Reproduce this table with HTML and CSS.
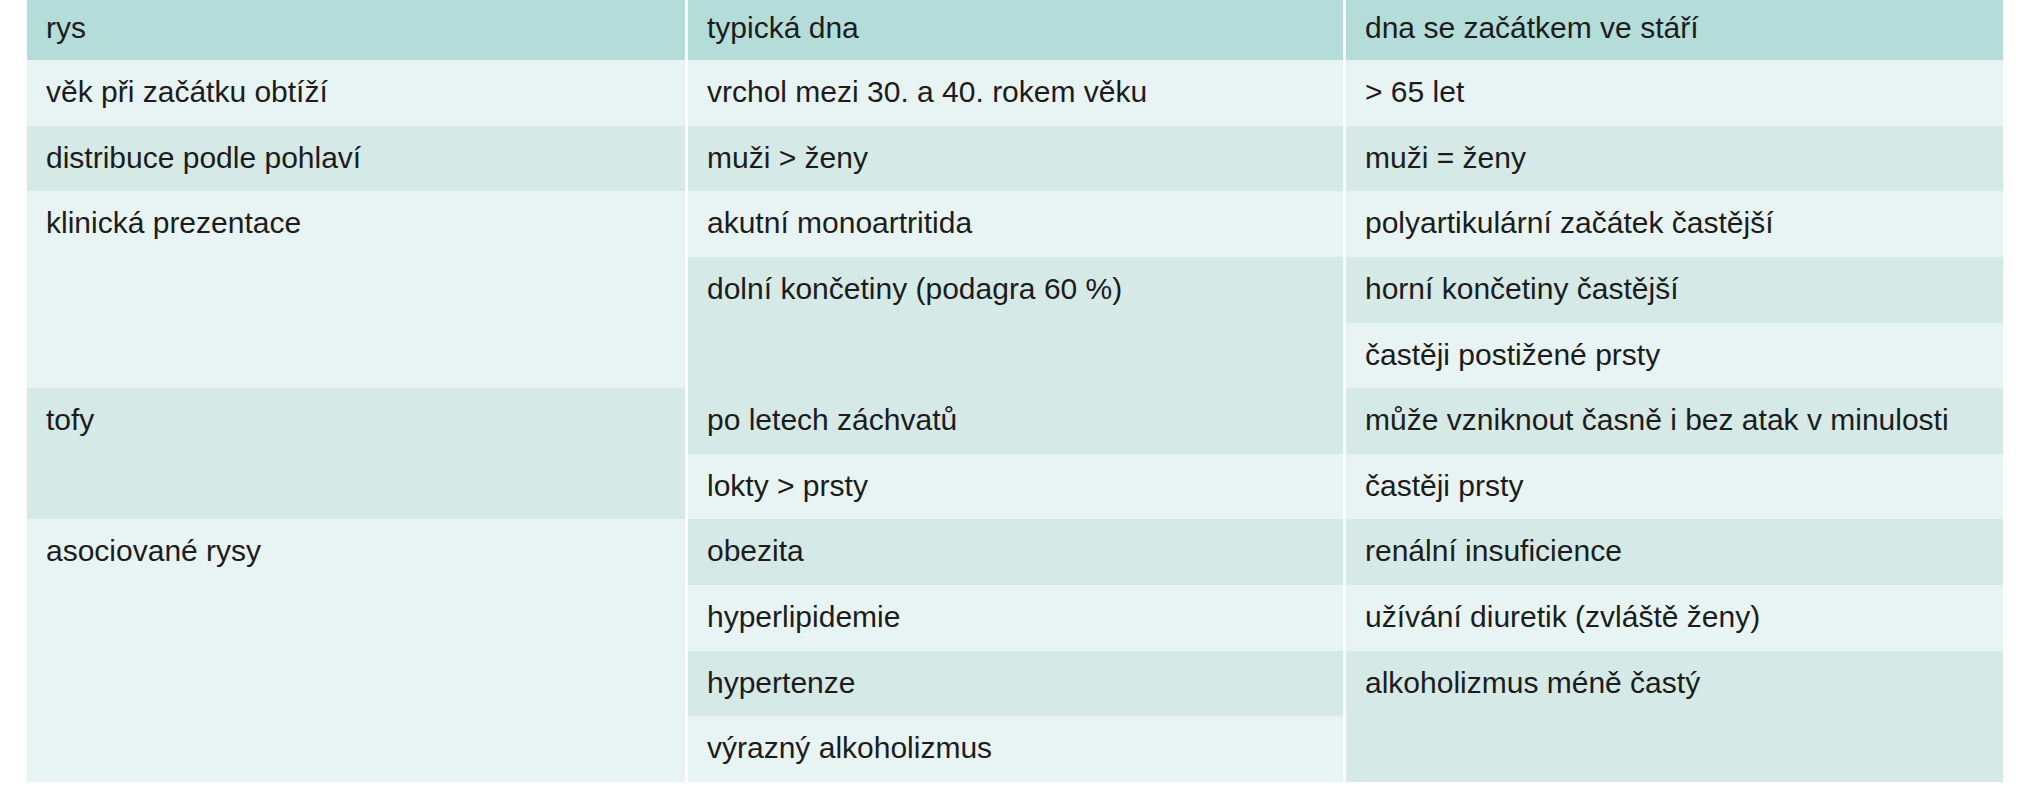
FILE: index.html
```html
<!DOCTYPE html>
<html lang="cs">
<head>
<meta charset="utf-8">
<title>Dna – srovnání</title>
<link rel="stylesheet" href="styles.css">
</head>
<body>
<div class="table">
  <div class="cell head">rys</div>
  <div class="cell head">typická dna</div>
  <div class="cell head">dna se začátkem ve stáří</div>

  <div class="cell l">věk při začátku obtíží</div>
  <div class="cell l">vrchol mezi 30. a 40. rokem věku</div>
  <div class="cell l">&gt; 65 let</div>

  <div class="cell d">distribuce podle pohlaví</div>
  <div class="cell d">muži &gt; ženy</div>
  <div class="cell d">muži = ženy</div>

  <div class="cell l span3">klinická prezentace</div>
  <div class="cell l">akutní monoartritida</div>
  <div class="cell l">polyartikulární začátek častější</div>
  <div class="cell d span2">dolní končetiny (podagra 60 %)</div>
  <div class="cell d">horní končetiny častější</div>
  <div class="cell l">častěji postižené prsty</div>

  <div class="cell d span2">tofy</div>
  <div class="cell d">po letech záchvatů</div>
  <div class="cell d">může vzniknout časně i bez atak v minulosti</div>
  <div class="cell l">lokty &gt; prsty</div>
  <div class="cell l">častěji prsty</div>

  <div class="cell l span4">asociované rysy</div>
  <div class="cell d">obezita</div>
  <div class="cell d">renální insuficience</div>
  <div class="cell l">hyperlipidemie</div>
  <div class="cell l">užívání diuretik (zvláště ženy)</div>
  <div class="cell d">hypertenze</div>
  <div class="cell d span2">alkoholizmus méně častý</div>
  <div class="cell l">výrazný alkoholizmus</div>
</div>
</body>
</html>
```

FILE: styles.css
```css
html, body {
  margin: 0;
  padding: 0;
  background: #ffffff;
}

body {
  font-family: "Liberation Sans", Arial, sans-serif;
  color: #1c1c1c;
}

.table {
  margin-left: 27px;
  display: grid;
  grid-template-columns: 658px 655px 657px;
  grid-template-rows: 60px repeat(11, 65.64px);
  column-gap: 3px;
  width: max-content;
}

.cell {
  font-size: 30px;
  line-height: 34px;
  padding: 15px 10px 0 19px;
  white-space: nowrap;
}

.head {
  background: #b4dcd9;
  padding-top: 11px;
}

.l {
  background: #e8f4f3;
}

.d {
  background: #d5e9e7;
}

.span2 {
  grid-row: span 2;
}

.span3 {
  grid-row: span 3;
}

.span4 {
  grid-row: span 4;
}
```
